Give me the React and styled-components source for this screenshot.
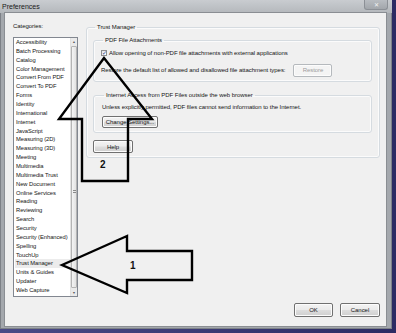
import React from "react";
import styled, { createGlobalStyle } from "styled-components";

const GlobalStyle = createGlobalStyle`
  html, body {
    margin: 0;
    padding: 0;
    background: #34336f;
  }
  body {
    font-family: "Liberation Sans", Arial, sans-serif;
  }
`;

const categories = [
  "Accessibility",
  "Batch Processing",
  "Catalog",
  "Color Management",
  "Convert From PDF",
  "Convert To PDF",
  "Forms",
  "Identity",
  "International",
  "Internet",
  "JavaScript",
  "Measuring (2D)",
  "Measuring (3D)",
  "Meeting",
  "Multimedia",
  "Multimedia Trust",
  "New Document",
  "Online Services",
  "Reading",
  "Reviewing",
  "Search",
  "Security",
  "Security (Enhanced)",
  "Spelling",
  "TouchUp",
  "Trust Manager",
  "Units & Guides",
  "Updater",
  "Web Capture",
];

const Desktop = styled.div`
  position: relative;
  width: 396px;
  height: 333px;
  background: linear-gradient(90deg, #4a4a86 0%, #2c2b63 100%);
  overflow: hidden;
`;

const Window = styled.div`
  width: 392px;
  height: 329px;
  background: #a4a8ad;
  box-shadow: inset 0 0 0 1px #7d8187;
  display: flex;
  flex-direction: column;
`;

const TitleBar = styled.div`
  height: 13px;
  display: flex;
  align-items: center;
  justify-content: space-between;
  padding: 0 4px 0 2px;
  background: linear-gradient(180deg, #c9ccd0 0%, #b4b8bc 100%);
`;

const Title = styled.span`
  font-size: 7px;
  color: #1a1a1a;
`;

const CloseButton = styled.span`
  width: 22px;
  height: 9px;
  margin-top: -4px;
  display: flex;
  align-items: center;
  justify-content: center;
  font-size: 6px;
  color: #f4f4f4;
  background: linear-gradient(180deg, #b9bdc2 0%, #a2a6ab 100%);
  border: 1px solid #8c9096;
  border-top: none;
  border-radius: 0 0 3px 3px;
`;

const Client = styled.div`
  margin-left: 5px;
  width: 381px;
  height: 313px;
  box-sizing: border-box;
  padding: 8px 6px 9px 8px;
  background: #f0f0f0;
  box-shadow: 0 0 0 1px #8a8e93;
  display: flex;
  gap: 8px;
  font-size: 6px;
  letter-spacing: -0.05px;
  color: #141414;
`;

const Sidebar = styled.div`
  width: 65px;
  display: flex;
  flex-direction: column;
  padding-bottom: 20px;
`;

const Caption = styled.div`
  height: 10px;
  line-height: 10px;
`;

const ListBox = styled.div`
  margin-top: 6px;
  flex: 1;
  display: flex;
  background: #ffffff;
  border: 1px solid #828790;
`;

const Items = styled.ul`
  flex: 1;
  list-style: none;
  margin: 0;
  padding: 0 0 0 1px;
  font-size: 5.8px;
`;

const Item = styled.li`
  height: 8.86px;
  line-height: 8.86px;
  padding-left: 1px;
  white-space: nowrap;
  background: ${(p) => (p.$selected ? "#ececec" : "transparent")};
`;

const ScrollBar = styled.div`
  width: 6px;
  display: flex;
  flex-direction: column;
  background: #eaeaea;
  border-left: 1px solid #e2e2e2;
`;

const ScrollArrow = styled.div`
  height: 7px;
  display: flex;
  align-items: center;
  justify-content: center;
  font-size: 3.5px;
  color: #5a5a5a;
`;

const ScrollThumb = styled.div`
  flex: 1;
  margin: 1px 0;
  display: flex;
  align-items: center;
  justify-content: center;
  background: linear-gradient(90deg, #f4f4f4 0%, #e2e2e2 100%);
  border: 1px solid #b4b4b4;
  border-radius: 1px;
`;

const Grip = styled.div`
  width: 3px;
  height: 3px;
  margin-top: 48px;
  background: repeating-linear-gradient(180deg, #8a8a8a 0 1px, transparent 1px 2px);
`;

const Panel = styled.div`
  width: 294px;
  display: flex;
  flex-direction: column;
  justify-content: space-between;
`;

const Group = styled.fieldset`
  margin: 0;
  min-width: 0;
  border: 1px solid #d5dbe0;
  border-radius: 3px;
  box-shadow: inset 0 0 0 1px #fbfbfb;
  padding: ${(p) => p.$pad};
  display: flex;
  flex-direction: column;
  gap: ${(p) => p.$gap || "0px"};
`;

const Legend = styled.legend`
  padding: 0 2px;
  margin-left: 2px;
  line-height: 12px;
  color: #141414;
`;

const Row = styled.div`
  display: flex;
  align-items: center;
  gap: ${(p) => p.$gap || "2px"};
  height: ${(p) => p.$h || "auto"};
`;

const Check = styled.span`
  width: 6px;
  height: 6px;
  display: flex;
  align-items: center;
  justify-content: center;
  background: linear-gradient(135deg, #dfe3e8 0%, #ffffff 100%);
  border: 1px solid #8f8f8f;
  box-sizing: border-box;
  font-size: 6px;
  line-height: 1;
  color: #2a3f8a;
`;

const Button = styled.button`
  width: ${(p) => p.$w};
  height: ${(p) => p.$h || "13px"};
  padding: 0;
  font-family: inherit;
  font-size: 6px;
  letter-spacing: -0.05px;
  color: ${(p) => (p.disabled ? "#9c9c9c" : "#141414")};
  border: 1px solid ${(p) => (p.disabled ? "#b5b9bd" : "#707070")};
  border-radius: 2px;
  background: ${(p) =>
    p.disabled
      ? "#f4f4f4"
      : "linear-gradient(180deg, #f3f3f3 0%, #ebebeb 48%, #dddddd 52%, #cfcfcf 100%)"};
  box-shadow: inset 0 0 0 1px #fcfcfc;
`;

const ButtonRow = styled.div`
  display: flex;
  justify-content: flex-end;
  gap: 7px;
`;

const Overlay = styled.svg`
  position: absolute;
  left: 0;
  top: 0;
  pointer-events: none;
`;

const Marker = styled.text`
  font-family: "Liberation Sans", Arial, sans-serif;
  font-weight: bold;
  font-size: 10px;
  fill: #111;
`;

export default function App() {
  return (
    <>
      <GlobalStyle />
      <Desktop>
        <Window>
          <TitleBar>
            <Title>Preferences</Title>
            <CloseButton>✕</CloseButton>
          </TitleBar>
          <Client>
            <Sidebar>
              <Caption>Categories:</Caption>
              <ListBox>
                <Items>
                  {categories.map((c) => (
                    <Item key={c} $selected={c === "Trust Manager"}>
                      {c}
                    </Item>
                  ))}
                </Items>
                <ScrollBar>
                  <ScrollArrow>▲</ScrollArrow>
                  <ScrollThumb>
                    <Grip />
                  </ScrollThumb>
                  <ScrollArrow>▼</ScrollArrow>
                </ScrollBar>
              </ListBox>
            </Sidebar>
            <Panel>
              <Group $pad="1px 7px 4px 6px" $gap="7px">
                <Legend>Trust Manager</Legend>
                <Group $pad="2px 6px 4px 7px" $gap="5px">
                  <Legend>PDF File Attachments</Legend>
                  <Row $h="10px">
                    <Check>✓</Check>
                    <span>Allow opening of non-PDF file attachments with external applications</span>
                  </Row>
                  <Row $gap="8px" $h="14px">
                    <span>Restore the default list of allowed and disallowed file attachment types:</span>
                    <Button $w="39px" disabled>
                      Restore
                    </Button>
                  </Row>
                </Group>
                <Group $pad="1px 6px 4px 8px" $gap="4px">
                  <Legend>Internet Access from PDF Files outside the web browser</Legend>
                  <Row $h="10px">
                    <span>Unless explicitly permitted, PDF files cannot send information to the Internet.</span>
                  </Row>
                  <Row>
                    <Button $w="56px" $h="12px">
                      Change Settings...
                    </Button>
                  </Row>
                </Group>
                <Row>
                  <Button $w="40px">Help</Button>
                </Row>
              </Group>
              <ButtonRow>
                <Button $w="39px" $h="14px">OK</Button>
                <Button $w="40px" $h="14px">Cancel</Button>
              </ButtonRow>
            </Panel>
          </Client>
        </Window>
        <Overlay width="396" height="333" viewBox="0 0 396 333">
          <polygon
            points="104,58 152,119 128,119 128,181 82,181 82,119 59,119"
            fill="none"
            stroke="#000"
            strokeWidth="2.4"
            strokeLinejoin="miter"
          />
          <polygon
            points="62,265 127,236 127,251 192,251 192,280 127,280 127,293"
            fill="none"
            stroke="#000"
            strokeWidth="2.4"
            strokeLinejoin="miter"
          />
          <Marker x="100" y="168">2</Marker>
          <Marker x="130" y="269">1</Marker>
        </Overlay>
      </Desktop>
    </>
  );
}
